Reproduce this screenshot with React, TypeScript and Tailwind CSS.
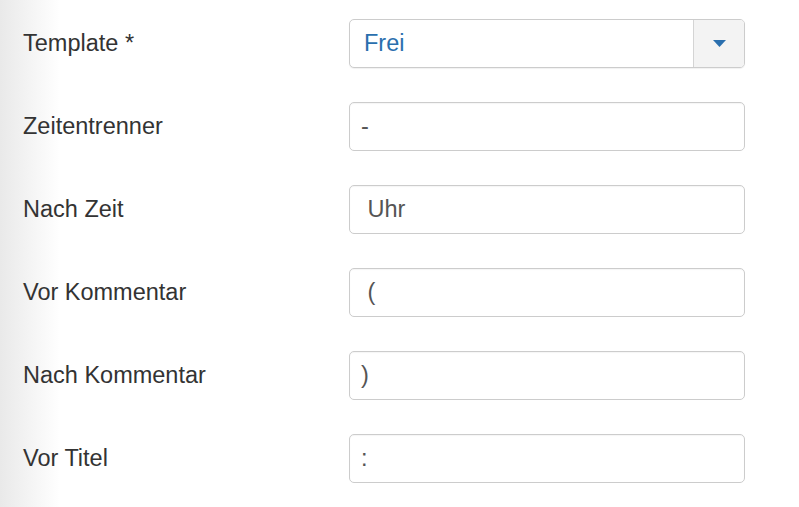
import React from 'react';

const fields = [
  { label: 'Zeitentrenner', value: '-' },
  { label: 'Nach Zeit', value: ' Uhr' },
  { label: 'Vor Kommentar', value: ' (' },
  { label: 'Nach Kommentar', value: ')' },
  { label: 'Vor Titel', value: ':' },
];

export default function App() {
  return (
    <div
      className="w-[799px] h-[507px] overflow-hidden bg-[linear-gradient(to_right,#e9e9e9,#ffffff_60px)] pt-[19px] flex flex-col gap-[34px] text-[23.5px]"
      style={{ fontFamily: '"Liberation Sans", Arial, sans-serif' }}
    >
      {/* Template select */}
      <div className="flex items-center h-[49px]">
        <label className="w-[349px] pl-[23px] text-[#333]">Template *</label>
        <div className="w-[396px] h-[49px] flex border border-[#ccc] rounded-[5px] bg-white shadow-[0_1px_1px_rgba(0,0,0,0.06)] overflow-hidden">
          <div className="flex-1 flex items-center pl-[14px] text-[#2a6fae]">Frei</div>
          <div className="w-[51px] flex items-center justify-center border-l border-[#d4d4d4] bg-[#f3f3f3]">
            <svg width="13" height="7" viewBox="0 0 13 7">
              <path d="M0 0h13L6.5 7z" fill="#2a6fae" />
            </svg>
          </div>
        </div>
      </div>

      {fields.map((f) => (
        <div key={f.label} className="flex items-center h-[49px]">
          <label className="w-[349px] pl-[23px] text-[#333]">{f.label}</label>
          <div className="w-[396px] h-[49px] flex items-center border border-[#ccc] rounded-[5px] bg-white pl-[11px] text-[#555] whitespace-pre shadow-[inset_0_1px_1px_rgba(0,0,0,0.04)]">
            {f.value}
          </div>
        </div>
      ))}
    </div>
  );
}
